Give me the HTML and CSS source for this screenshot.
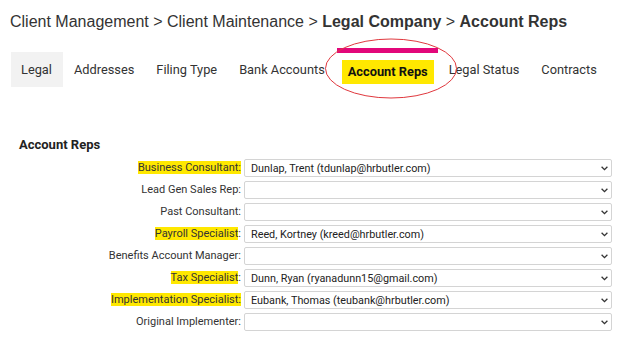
FILE: index.html
```html
<!DOCTYPE html>
<html lang="en">
    <head>
        <meta charset="utf-8">
        <title>Account Reps</title>
        <link rel="stylesheet" href="styles.css">
    </head>
    <body>
        <h1 class="crumbs">Client Management &gt; Client Maintenance &gt; <b>Legal Company</b> &gt; <b>Account Reps</b></h1>

        <nav class="tabs">
            <a class="tab tab-first">Legal</a>
            <a class="tab">Addresses</a>
            <a class="tab">Filing Type</a>
            <a class="tab">Bank Accounts</a>
            <a class="tab tab-active"><span class="mark">Account Reps</span></a>
            <a class="tab">Legal Status</a>
            <a class="tab">Contracts</a>
            <!-- red circle drawn over the active tab -->
            <svg class="ring" width="134" height="61" viewBox="0 0 134 61">
                <ellipse cx="67" cy="30.5" rx="65.5" ry="29.5" fill="none" stroke="#e0383e" stroke-width="1"/>
            </svg>
        </nav>

        <main class="reps">
            <h2>Account Reps</h2>
            <div class="rows">
                <label><span class="mark">Business Consultant:</span></label>
                <div class="pick"><select><option>Dunlap, Trent (tdunlap@hrbutler.com)</option></select></div>

                <label>Lead Gen Sales Rep:</label>
                <div class="pick"><select><option></option></select></div>

                <label>Past Consultant:</label>
                <div class="pick"><select><option></option></select></div>

                <label><span class="mark">Payroll Specialist</span>:</label>
                <div class="pick"><select><option>Reed, Kortney (kreed@hrbutler.com)</option></select></div>

                <label>Benefits Account Manager:</label>
                <div class="pick"><select><option></option></select></div>

                <label><span class="mark">Tax Specialist</span>:</label>
                <div class="pick"><select><option>Dunn, Ryan (ryanadunn15@gmail.com)</option></select></div>

                <label><span class="mark">Implementation Specialist:</span></label>
                <div class="pick"><select><option>Eubank, Thomas (teubank@hrbutler.com)</option></select></div>

                <label>Original Implementer:</label>
                <div class="pick"><select><option></option></select></div>
            </div>
        </main>

        <script>
            // chevron for every dropdown
            document.querySelectorAll(".pick").forEach(function (p) {
                p.insertAdjacentHTML("beforeend",
                    '<svg class="chev" width="7" height="5" viewBox="0 0 7 5"><path d="M0.6 0.8 L3.5 3.7 L6.4 0.8" fill="none" stroke="#333" stroke-width="1.3"/></svg>');
            });
        </script>
    </body>
</html>
```

FILE: styles.css
```css
body {
    margin: 0;
    font-family: Roboto, "Liberation Sans", sans-serif;
    color: #333;
    background: #fff;
}

.crumbs {
    font-family: "Liberation Sans Narrow", "Arial Narrow", "Liberation Sans", sans-serif;
    font-size: 16px;
    font-weight: normal;
    line-height: 21px;
    white-space: nowrap;
    margin: 0;
    padding: 11px 10px 0 10px;
    color: #333;
}
.crumbs b {
    font-weight: bold;
}

.tabs {
    position: relative;
    display: flex;
    margin: 20px 0 0 11px;
    height: 35px;
    font-size: 12.8px;
    white-space: nowrap;
}
.tab {
    display: flex;
    align-items: center;
    padding: 0 11px;
    color: #333;
}
.tab-first {
    background: #f2f2f2;
    padding: 0 11px 0 10px;
}
.tab-active {
    margin-left: 6px;
    margin-right: 4px;
    padding: 5px 0 0 0;
    font-weight: bold;
    color: #111;
    position: relative;
}
.tab-active:before {
    content: "";
    position: absolute;
    top: -4px;
    left: -5px;
    right: -4px;
    height: 5px;
    background: #e2077a;
}
.tab-active .mark {
    padding: 4px 6px 5px 6px;
}
.ring {
    position: absolute;
    left: 313px;
    top: -14px;
}

.mark {
    background: #ffe800;
}

.reps {
    padding: 0 0 0 19px;
    margin-top: 50px;
}
.reps h2 {
    font-size: 13px;
    font-weight: bold;
    margin: 0 0 7px 0;
    color: #222;
}

.rows {
    display: grid;
    grid-template-columns: 222px 368px;
    column-gap: 3px;
    row-gap: 4px;
}
.rows label {
    text-align: right;
    font-size: 11px;
    line-height: 18px;
    color: #333;
}

.pick {
    position: relative;
}
.pick select {
    appearance: none;
    -webkit-appearance: none;
    display: block;
    width: 100%;
    height: 18px;
    margin: 0;
    padding: 0 20px 0 6px;
    border: 1px solid #d4d4d4;
    border-radius: 2px;
    background: #fff;
    font-family: Roboto, "Liberation Sans", sans-serif;
    font-size: 10.8px;
    color: #222;
    box-sizing: border-box;
}
.chev {
    position: absolute;
    right: 4px;
    top: 7px;
}
```
